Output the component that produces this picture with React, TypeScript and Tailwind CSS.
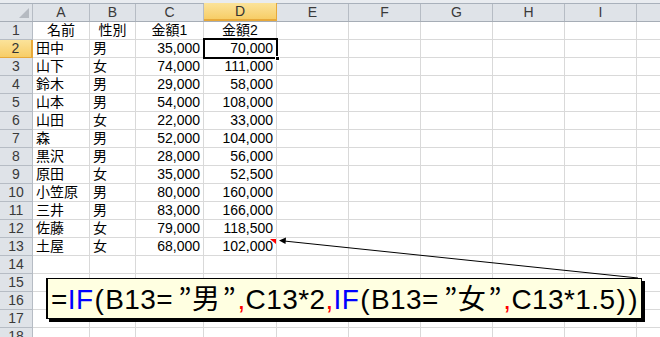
import React from 'react'

const COLS = ['A', 'B', 'C', 'D', 'E', 'F', 'G', 'H', 'I', '']

const ROWS: string[][] = [
  ['名前', '性別', '金額1', '金額2'],
  ['田中', '男', '35,000', '70,000'],
  ['山下', '女', '74,000', '111,000'],
  ['鈴木', '男', '29,000', '58,000'],
  ['山本', '男', '54,000', '108,000'],
  ['山田', '女', '22,000', '33,000'],
  ['森', '男', '52,000', '104,000'],
  ['黒沢', '男', '28,000', '56,000'],
  ['原田', '女', '35,000', '52,500'],
  ['小笠原', '男', '80,000', '160,000'],
  ['三井', '男', '83,000', '166,000'],
  ['佐藤', '女', '79,000', '118,500'],
  ['土屋', '女', '68,000', '102,000'],
  [],
  [],
  [],
  [],
  [],
]

const grid = 'grid grid-cols-[33px_57px_46px_68px_73px_72px_72px_72px_72px_72px_72px]'

function Cell({ row, col, value }: { row: number; col: number; value?: string }) {
  const header = row === 1
  const num = !header && col >= 2
  return (
    <div
      className={
        'h-[18px] border-r border-b border-[#d9d9d9] px-[3px] leading-[17px] whitespace-nowrap overflow-visible ' +
        (header ? 'text-center' : num ? 'text-right' : 'text-left')
      }
    >
      {value}
    </div>
  )
}

function Quote({ open }: { open?: boolean }) {
  return (
    <span
      className={
        "inline-block font-['Noto_Sans_CJK_JP'] " + (open ? 'w-[19px] text-right' : 'w-[17px] text-left pl-[2px]')
      }
    >
      ”
    </span>
  )
}

// 括弧は少し幅広く
function P({ c }: { c: string }) {
  return <span className="px-[1px]">{c}</span>
}

function Formula() {
  return (
    <div className="font-['Liberation_Sans','Noto_Sans_CJK_JP',sans-serif] text-[28px] leading-none tracking-[0.4px] text-black whitespace-nowrap">
      =<span className="text-[#0000ff]">IF</span>
      <P c="(" />
      B13=
      <Quote open />男<Quote />
      <span className="text-[#ff0000]">,</span>C13*2<span className="text-[#ff0000]">,</span>
      <span className="text-[#0000ff]">IF</span>
      <P c="(" />
      B13=
      <Quote open />女<Quote />
      <span className="text-[#ff0000]">,</span>C13*1.5
      <P c=")" />
      <P c=")" />
    </div>
  )
}

export default function App() {
  return (
    <div className="relative w-[660px] h-[337px] overflow-hidden bg-white font-['Liberation_Sans','Noto_Sans_CJK_JP',sans-serif] text-[14px] text-black">
      {/* 上部の帯 */}
      <div className="h-[4px] bg-[#e9ecf0] border-b border-[#a9b1bb]" />

      {/* 列見出し */}
      <div className={grid + ' h-[18px] bg-[#dfe3e8] border-b border-[#a6adb6] text-[#3a3a3a]'}>
        <div className="relative border-r border-[#b6bcc4]">
          <div className="absolute right-[3px] bottom-[3px] w-0 h-0 border-l-[10px] border-l-transparent border-b-[10px] border-b-[#b5bac1]" />
        </div>
        {COLS.map((c, j) =>
          c === 'D' ? (
            <div
              key={j}
              className="-mt-px h-[18px] bg-gradient-to-b from-[#fbe39a] to-[#f7cd66] border-r border-b-2 border-[#e7a93a] text-center leading-[17px] text-[#333]"
            >
              {c}
            </div>
          ) : (
            <div key={j} className="border-r border-[#b6bcc4] text-center leading-[17px]">
              {c}
            </div>
          )
        )}
      </div>

      {/* 行 */}
      {ROWS.map((r, i) => {
        const row = i + 1
        return (
          <div key={row} className={grid}>
            {row === 2 ? (
              <div className="h-[18px] bg-gradient-to-b from-[#fbe39a] to-[#f7cd66] border-r-2 border-b border-[#e7a93a] text-center leading-[17px] text-[#333]">
                {row}
              </div>
            ) : (
              <div className="h-[18px] bg-[#dfe3e8] border-r border-b border-[#b6bcc4] text-center leading-[17px] text-[#3a3a3a]">
                {row}
              </div>
            )}
            {COLS.map((c, j) => (
              <Cell key={j} row={row} col={j} value={r[j]} />
            ))}
          </div>
        )
      })}

      {/* 選択セル D2 */}
      <div className="absolute left-[203px] top-[38px] w-[75px] h-[21px] border-2 border-black pointer-events-none" />
      <div className="absolute left-[275px] top-[56px] w-[5px] h-[5px] bg-black border border-white pointer-events-none" />

      {/* コメントの赤い三角 */}
      <div className="absolute left-[270px] top-[239px] w-0 h-0 border-l-[6px] border-l-transparent border-t-[5px] border-t-[#ff0000]" />

      {/* 引き出し線 */}
      <svg className="absolute inset-0 pointer-events-none" width="660" height="337">
        <line x1="638" y1="278" x2="284" y2="241" stroke="#000" strokeWidth="1" />
        <polygon points="279,240.5 286,237.5 285.5,244" fill="#000" />
      </svg>

      {/* 吹き出し */}
      <div className="absolute left-[46px] top-[278px] w-[596px] h-[41px] flex items-center pl-[3px] bg-[#ffffe1] border border-l-2 border-black shadow-[3px_3px_0_0_#000]">
        <Formula />
      </div>
    </div>
  )
}
